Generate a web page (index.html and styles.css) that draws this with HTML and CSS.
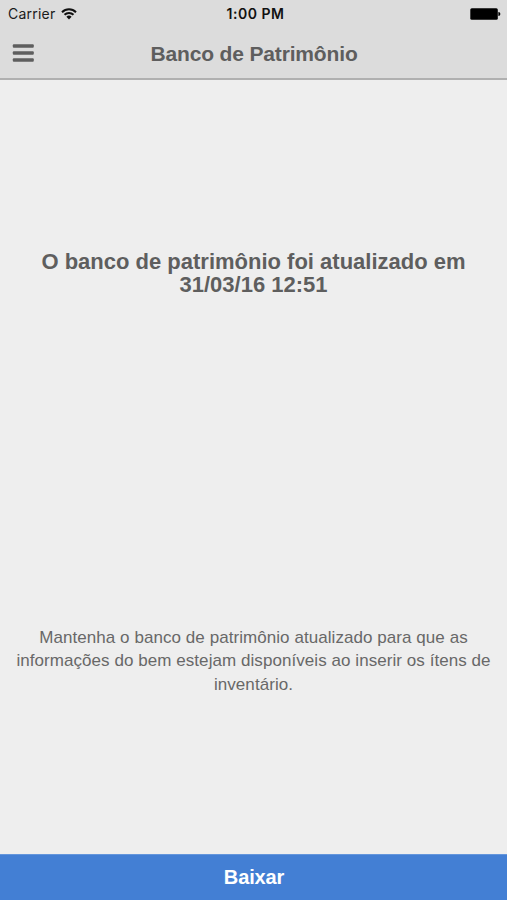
FILE: index.html
```html
<!DOCTYPE html>
<html lang="pt-BR">

<head>
    <meta charset="UTF-8">
    <meta name="viewport" content="width=device-width, initial-scale=1.0">
    <title>Banco de Patrimônio</title>
    <link rel="stylesheet" href="styles.css">
</head>

<body>
    <header>
        <div class="status-bar">
            <div class="carrier">
                <span>Carrier</span>
                <svg class="wifi" viewBox="0 0 16 12" width="16" height="12">
                    <path d="M1 4.2a10 10 0 0 1 14 0M3.5 6.8a6.4 6.4 0 0 1 9 0" />
                    <path class="dot" d="M8 11.4L5.4 8.7a3.7 3.7 0 0 1 5.2 0z" />
                </svg>
            </div>
            <span class="time">1:00 PM</span>
            <svg class="battery" viewBox="0 0 31 12" width="31" height="12">
                <rect x="0.3" y="0.3" width="27.5" height="11.4" rx="1.5" />
                <path d="M28.4 4a2 2 0 0 1 0 4z" />
            </svg>
        </div>
        <div class="title-bar">
            <button class="menu" aria-label="Menu">
                <svg viewBox="0 0 22 18" width="22" height="18">
                    <rect x="0.8" y="0.2" width="21" height="3.6" rx="1" />
                    <rect x="0.8" y="7.2" width="21" height="3.6" rx="1" />
                    <rect x="0.8" y="14.2" width="21" height="3.6" rx="1" />
                </svg>
            </button>
            <h1>Banco de Patrimônio</h1>
        </div>
    </header>

    <main>
        <h2>O banco de patrimônio foi atualizado em<br>31/03/16 12:51</h2>
        <p>Mantenha o banco de patrimônio atualizado para que as<br>informações do bem estejam disponíveis ao inserir os ítens de<br>inventário.</p>
    </main>

    <footer>
        <button class="download">Baixar</button>
    </footer>
</body>

</html>
```

FILE: styles.css
```css
* {
    box-sizing: border-box;
}

body {
    background-color: #eee;
    color: #5e5e5e;
    font-family: "Liberation Sans", Helvetica, Arial, sans-serif;
    margin: 0;
    height: 900px;
    display: flex;
    flex-direction: column;
    overflow: hidden;
}

header {
    background-color: #dcdcdc;
    border-bottom: 2px solid #b0b0b0;
    height: 80px;
}

.status-bar {
    color: #1a1a1a;
    display: grid;
    grid-template-columns: 1fr auto 1fr;
    align-items: center;
    height: 27px;
    padding: 0 6px 0 8px;
    font-family: Inter, sans-serif;
    font-size: 14px;
}

.carrier {
    display: flex;
    align-items: center;
    gap: 6px;
    letter-spacing: 0.22px;
}

.wifi {
    fill: none;
    stroke: #111;
    stroke-width: 2;
}

.wifi .dot {
    fill: #111;
    stroke: none;
}

.time {
    color: #111;
    font-weight: 600;
    letter-spacing: 0.55px;
    padding-left: 2px;
}

.battery {
    justify-self: end;
    fill: #000;
}

.title-bar {
    display: grid;
    grid-template-columns: 47px 1fr 46px;
    align-items: center;
    height: 52px;
}

.menu {
    background: none;
    border: 0;
    padding: 0 0 0 12px;
    display: flex;
}

.menu svg {
    fill: #5e5e5e;
}

h1 {
    margin: 0;
    padding-top: 1px;
    font-size: 21px;
    line-height: 24px;
    letter-spacing: -0.15px;
    text-align: center;
}

main {
    flex: 1;
    display: flex;
    flex-direction: column;
    justify-content: space-between;
    padding: 170px 0 158px;
    text-align: center;
    white-space: nowrap;
}

h2 {
    margin: 0;
    font-size: 22px;
    line-height: 23px;
}

p {
    color: #686868;
    margin: 0;
    font-size: 17px;
    line-height: 23.5px;
    letter-spacing: 0.06px;
}

.download {
    background-color: #437fd4;
    border: 0;
    border-top: 1px solid #6496dc;
    color: #fff;
    display: block;
    width: 100%;
    height: 46px;
    padding: 0 0 0 1px;
    font-family: inherit;
    font-size: 20px;
    font-weight: bold;
    letter-spacing: -0.15px;
}
```
